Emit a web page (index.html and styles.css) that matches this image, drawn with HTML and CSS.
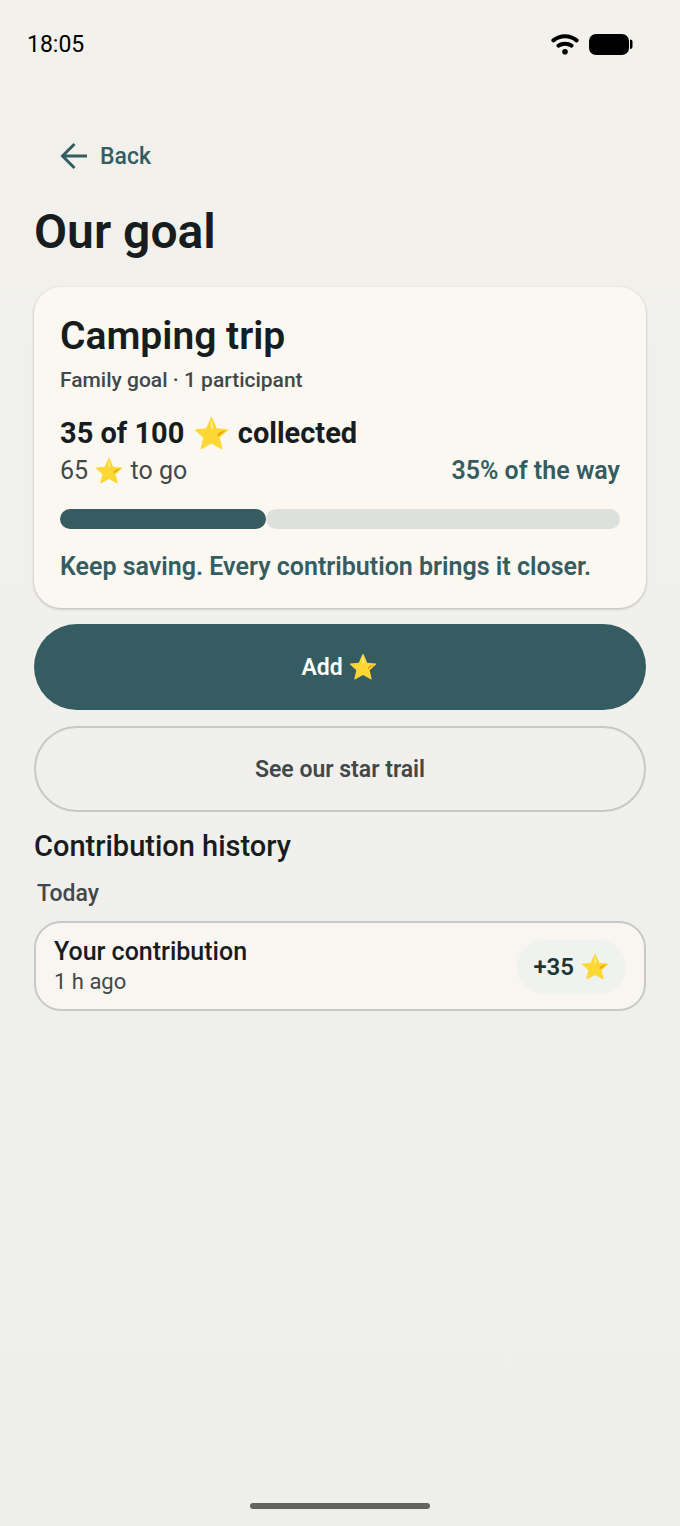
FILE: index.html
```html
<!DOCTYPE html>
<html lang="en">
<head>
<meta charset="utf-8">
<meta name="viewport" content="width=device-width, initial-scale=1">
<title>Our goal</title>
<link rel="stylesheet" href="styles.css">
</head>
<body>
<svg class="defs" width="0" height="0" aria-hidden="true">
  <symbol id="star" viewBox="0 0 32 32">
    <path d="M16 1 Q16.5 1 16.9 2 L20.8 11.2 L30.4 12 Q31.8 12.2 30.8 13.2 L23.6 19.6 L25.9 29.4 Q26 30.8 24.8 30.1 L16 25.2 L7.2 30.1 Q6 30.8 6.1 29.4 L8.4 19.6 L1.2 13.2 Q.2 12.2 1.6 12 L11.2 11.2 L15.1 2 Q15.5 1 16 1Z" fill="#fdd835"/>
    <path d="M16 3 L17.3 10.6 Q17.1 12.6 15.7 11.6 Q14.8 7 16 3Z" fill="#fff3a0"/>
    <path d="M29.3 13.2 L22.5 18.2 Q20.7 18.4 21.4 16.6 Q23.5 14 29.3 13.2Z" fill="#eba900"/>
  </symbol>
</svg>
<div class="screen">
  <header class="status">
    <time>18:05</time>
    <div class="status-icons">
      <svg width="28" height="22" viewBox="0 0 28 22" aria-label="Wi-Fi" role="img">
        <path d="M2.4 7.4 C9 1.8 19 1.8 25.6 7.4 M7.5 12.6 C11 10 17 10 20.5 12.6" fill="none" stroke="#000" stroke-width="4" stroke-linecap="round"/>
        <circle cx="14" cy="18.8" r="2.8"/>
      </svg>
      <svg width="45" height="22" viewBox="0 0 45 22" aria-label="Battery" role="img">
        <rect width="40" height="21" x="1" y="1" rx="7"/>
        <path d="M42 6.5 Q44.5 6.5 44.5 8.5 V14 Q44.5 16 42 16Z"/>
      </svg>
    </div>
  </header>
  <main class="content">
    <button class="back" type="button">
      <svg width="28" height="28" viewBox="0 0 28 28" aria-hidden="true"><path d="M27 14 H2.5 M14.5 2 L2.5 14 L14.5 26" fill="none" stroke="currentColor" stroke-width="3"/></svg>
      Back
    </button>
    <h1 class="title">Our goal</h1>
    <section class="goal">
      <h2 class="goal-name">Camping trip</h2>
      <p class="goal-meta">Family goal · 1 participant</p>
      <p class="collected">35 of 100 <svg class="star star-large" role="img" aria-label="stars"><use href="#star"/></svg> collected</p>
      <div class="remaining">
        <span>65 <svg class="star" role="img" aria-label="stars"><use href="#star"/></svg> to go</span>
        <strong class="percent">35% of the way</strong>
      </div>
      <div class="progress" role="progressbar" aria-label="Goal progress" aria-valuenow="35" aria-valuemin="0" aria-valuemax="100">
        <div class="progress-done" style="width: 36.8%"></div>
        <div class="progress-left"></div>
      </div>
      <p class="cheer">Keep saving. Every contribution brings it closer.</p>
    </section>
    <button class="action action-primary" type="button">Add <svg class="star" role="img" aria-label="stars"><use href="#star"/></svg></button>
    <button class="action action-outline" type="button">See our star trail</button>
    <section class="history">
      <h2 class="history-title">Contribution history</h2>
      <h3 class="day">Today</h3>
      <article class="entry">
        <div>
          <p class="entry-name">Your contribution</p>
          <p class="entry-time">1 h ago</p>
        </div>
        <span class="amount">+35 <svg class="star" role="img" aria-label="stars"><use href="#star"/></svg></span>
      </article>
    </section>
  </main>
  <div class="home-bar"></div>
</div>
</body>
</html>
```
FILE: styles.css
```css
* { box-sizing: border-box; }
body {
  margin: 0;
  font-family: Roboto, "Liberation Sans", sans-serif;
  font-size: 23px;
  color: #171d1e;
}
h1, h2, h3, p { margin: 0; font-weight: 500; }
button { font: inherit; font-weight: 500; cursor: pointer; }
.defs { position: absolute; }
.screen {
  min-height: 100vh;
  display: flex;
  flex-direction: column;
  background: linear-gradient(#f2f1ec, #eeeeec);
}
.status {
  display: flex;
  justify-content: space-between;
  align-items: center;
  height: 88px;
  padding: 0 47px 0 27px;
  color: #000;
}
.status-icons { display: flex; align-items: center; gap: 9px; }
.content {
  flex: 1;
  display: flex;
  flex-direction: column;
  gap: 16px;
  padding: 36px 34px;
}
.back {
  align-self: flex-start;
  display: flex;
  align-items: center;
  gap: 12px;
  height: 64px;
  padding: 0 26px;
  border: 0;
  background: none;
  color: #355d61;
}
.title { margin: -2px 0 9px; font-size: 48px; line-height: 60px; font-weight: 600; }
.goal {
  padding: 26px 26px 23px;
  border-radius: 27px;
  background: #fbf8f2;
  box-shadow: 0 1px 3px rgba(0, 0, 0, .25);
}
.goal-name { font-size: 39px; line-height: 46px; font-weight: 600; }
.goal-meta { margin: 7px 0 20px; font-size: 21px; line-height: 28px; color: #424849; }
.collected { font-size: 29px; line-height: 38px; font-weight: 700; }
.remaining {
  display: flex;
  justify-content: space-between;
  font-size: 25px;
  line-height: 38px;
  color: #424849;
}
.percent { font-weight: 600; color: #355d61; }
.star { width: 28px; height: 28px; margin: 0 1px; vertical-align: -6px; }
.star-large { width: 35px; height: 35px; margin: 0 2px; vertical-align: -8px; }
.progress { display: flex; height: 20px; margin: 19px 0 20px; }
.progress-done { border-radius: 10px; background: #355d61; }
.progress-left { flex: 1; border-radius: 10px; background: #dde0dc; }
.cheer { font-size: 25px; line-height: 36px; font-weight: 600; color: #355d61; }
.action { height: 86px; border: 0; border-radius: 43px; }
.action-primary { background: #355d61; color: #fff; font-weight: 600; }
.action-outline { border: 2px solid #c6c9c7; background: none; color: #424849; font-weight: 600; }
.history-title { font-size: 29px; line-height: 36px; }
.day { margin: 16px 3px 13px; font-size: 23px; line-height: 28px; color: #424849; }
.entry {
  display: flex;
  justify-content: space-between;
  align-items: center;
  padding: 14px 18px 12px;
  border: 2px solid #c6c9c7;
  border-radius: 27px;
  background: #f9f6f1;
}
.entry-name { font-size: 25px; line-height: 30px; }
.entry-time { font-size: 22px; line-height: 30px; font-weight: 400; color: #424849; }
.amount {
  padding: 0 16px;
  border-radius: 27px;
  background: #eff2ee;
  font-size: 24px;
  line-height: 54px;
  font-weight: 600;
  color: #16383b;
}
.home-bar {
  align-self: center;
  width: 180px;
  height: 6px;
  margin-bottom: 17px;
  border-radius: 3px;
  background: #636462;
}
```
